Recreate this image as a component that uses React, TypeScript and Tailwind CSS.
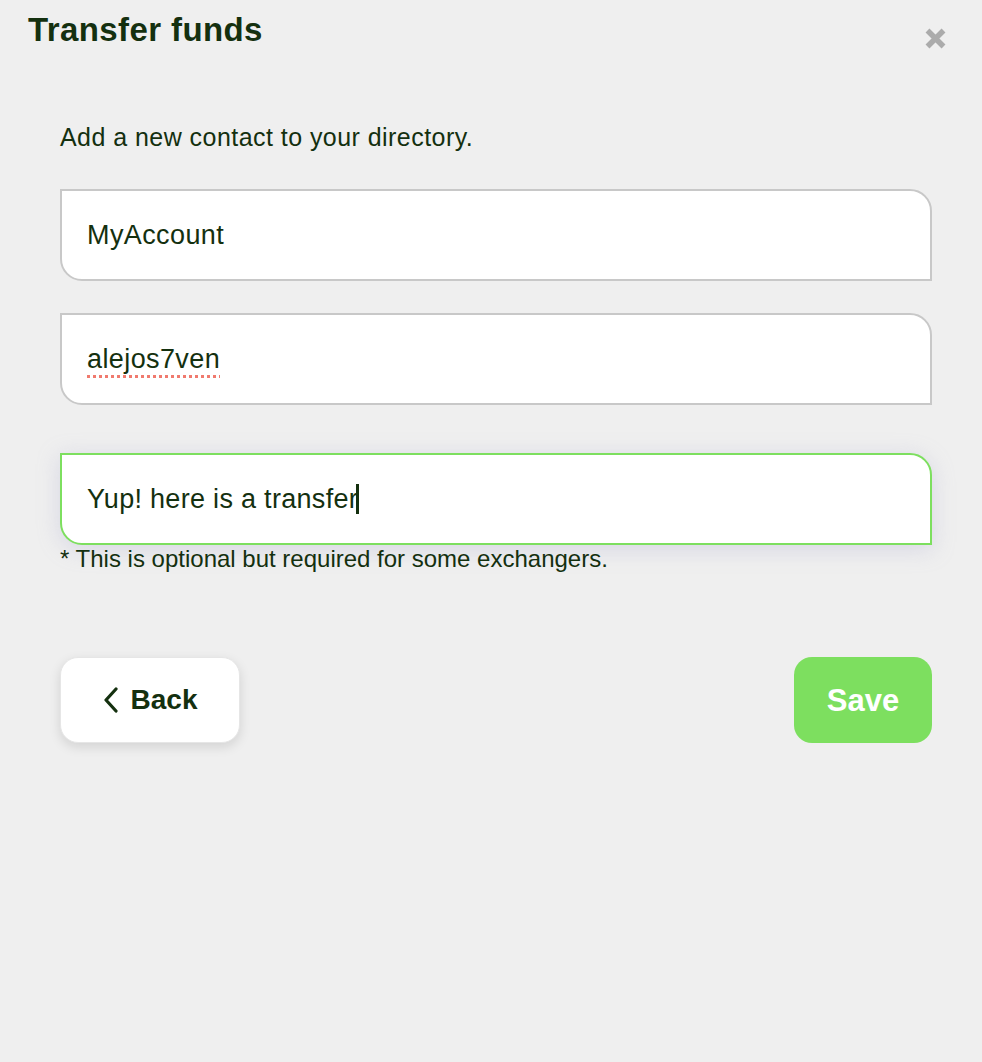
import React from "react";

const ink = "text-[#14300f]";

function Field({ children, focused = false }: { children: React.ReactNode; focused?: boolean }) {
  return (
    <div
      className={
        "h-[92px] w-full flex items-center pl-[25px] bg-white rounded-tr-[22px] rounded-bl-[22px] border-2 " +
        (focused
          ? "border-[#7ddf5f] shadow-[0_4px_22px_rgba(170,170,205,0.35)]"
          : "border-[#c8c8c8]")
      }
    >
      {children}
    </div>
  );
}

export default function App() {
  return (
    <div
      className={"w-full h-[1062px] bg-[#efefef] " + ink}
      style={{ fontFamily: '"Liberation Sans", Arial, Helvetica, sans-serif' }}
    >
      <div className="flex justify-between pl-[28px] pr-[35px] pt-[13px]">
        <h1 className="text-[33px] leading-[33px] font-bold tracking-[0.4px]">Transfer funds</h1>
        <svg width="23" height="21" viewBox="0 0 23 21" className="mt-[15px]">
          <path d="M3.5 2.5 L19.5 18.5 M19.5 2.5 L3.5 18.5" stroke="#ababab" strokeWidth="5.5" strokeLinecap="butt" />
        </svg>
      </div>

      <div className="pl-[60px] pr-[50px]">
        <p className="mt-[76px] text-[25px] leading-[24px] tracking-[0.45px]">
          Add a new contact to your directory.
        </p>

        <div className="mt-[40px]">
          <Field>
            <span className="text-[27px] leading-[30px] tracking-[0.4px]">MyAccount</span>
          </Field>
        </div>

        <div className="mt-[32px]">
          <Field>
            <span className="text-[27px] leading-[30px] tracking-[0.4px] underline decoration-dotted decoration-[#f07a6e] decoration-[3px] underline-offset-[7px]">
              alejos7ven
            </span>
          </Field>
        </div>

        <div className="mt-[48px]">
          <Field focused>
            <span className="text-[27px] leading-[30px] tracking-[0.3px] flex items-center">
              Yup! here is a transfer
              <span className="inline-block w-[3px] h-[30px] bg-[#14300f] -ml-[2px]" />
            </span>
          </Field>
        </div>

        <p className="mt-[2px] text-[24px] leading-[24px]">
          * This is optional but required for some exchangers.
        </p>

        <div className="mt-[86px] flex justify-between items-center">
          <button className="w-[180px] h-[86px] bg-white rounded-[18px] border border-[#e6e6e6] shadow-[0_4px_12px_rgba(0,0,0,0.12)] flex items-center justify-center gap-[12px]">
            <svg width="16" height="26" viewBox="0 0 16 26">
              <path d="M13 2 L3 13 L13 24" fill="none" stroke="#14300f" strokeWidth="3.2" strokeLinecap="round" strokeLinejoin="round" />
            </svg>
            <span className="text-[28px] font-bold leading-[28px]">Back</span>
          </button>
          <button className="w-[138px] h-[86px] bg-[#7ddf5f] rounded-[18px] flex items-center justify-center">
            <span className="text-[31px] font-bold text-white leading-[31px]">Save</span>
          </button>
        </div>
      </div>
    </div>
  );
}
